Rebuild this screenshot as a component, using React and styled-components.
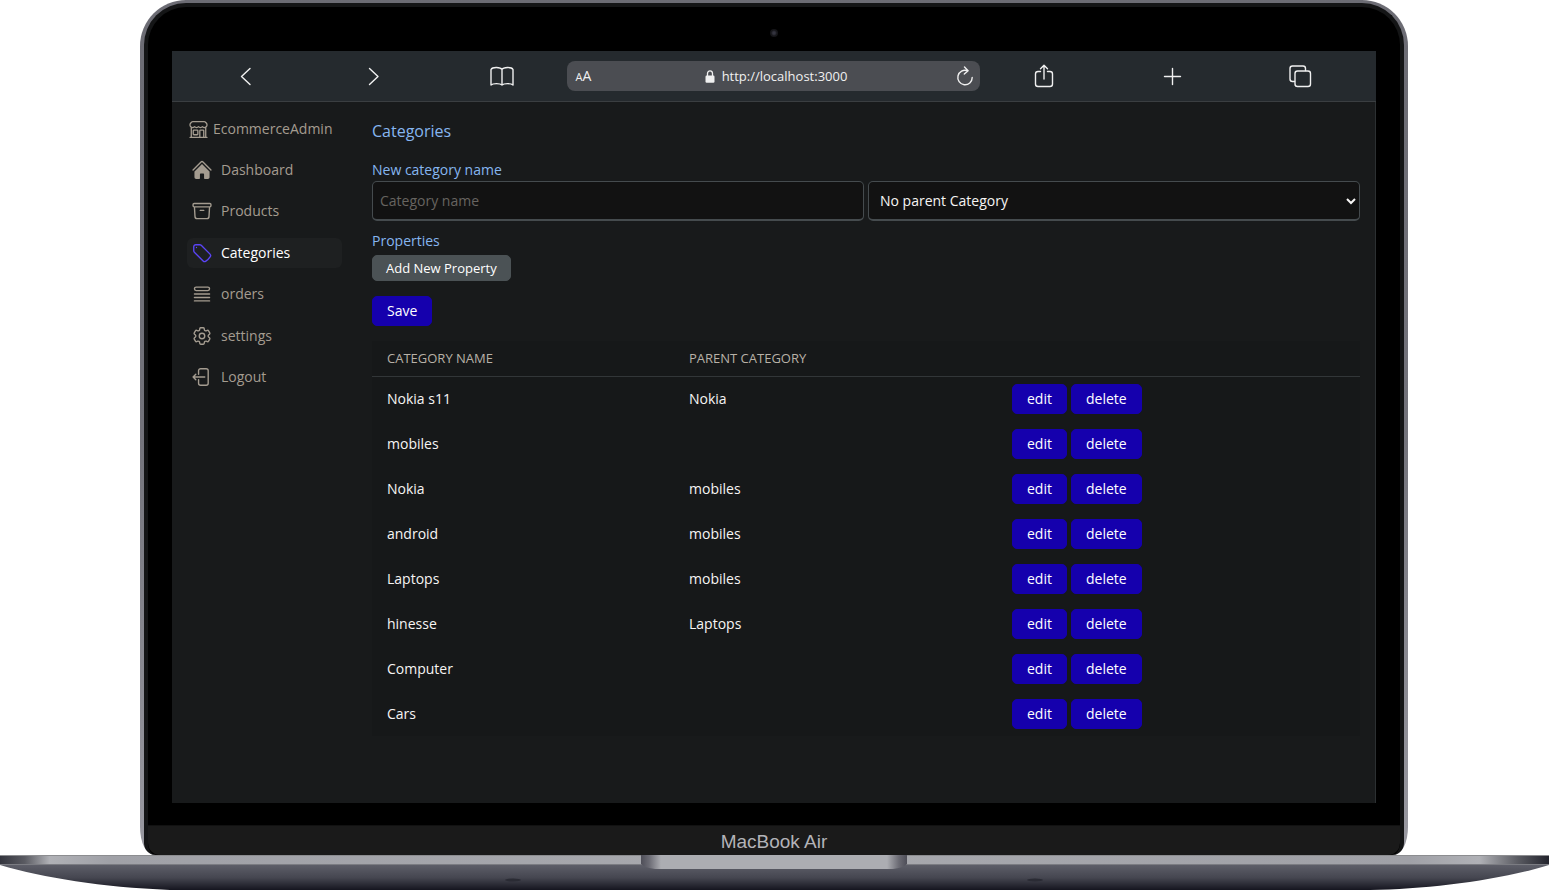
import React from "react";
import styled, { createGlobalStyle } from "styled-components";
import {
  HiHome,
  HiOutlineArchiveBox,
  HiOutlineBuildingStorefront,
  HiOutlineCog6Tooth,
  HiOutlineQueueList,
  HiOutlineTag,
} from "react-icons/hi2";

const GlobalStyle = createGlobalStyle`
  *, *::before, *::after { box-sizing: border-box; }
  body {
    margin: 0;
    background: #fff;
    color: #f6f5f4;
    font-family: "Open Sans", "Noto Sans", sans-serif;
    font-size: 14px;
    line-height: 20px;
  }
  button, input, select { font: inherit; color: inherit; margin: 0; }
  h1, p { margin: 0; font-weight: 400; }
`;

const Laptop = styled.div`
  display: flex;
  flex-direction: column;
  min-height: 100vh;
`;

const Lid = styled.div`
  flex: 1;
  display: flex;
  flex-direction: column;
  margin: 0 141px 0 140px;
  padding: 3px 4px 0;
  border-radius: 46px 46px 14px 14px / 46px 46px 28px 28px;
  background: linear-gradient(#6c6c74, #73737b 50%, #9a9aa2);
`;

const Bezel = styled.div`
  flex: 1;
  display: flex;
  flex-direction: column;
  border: solid #141516;
  border-width: 4px 4px 0;
  border-radius: 42px 42px 12px 12px;
  background: #000;
  overflow: hidden;
`;

const CameraStrip = styled.div`
  display: flex;
  align-items: center;
  justify-content: center;
  height: 44px;
  padding-top: 8px;
`;

const Camera = styled.span`
  width: 8px;
  height: 8px;
  border-radius: 50%;
  background: radial-gradient(#34343f 20%, #17171b 50%, #101012);
`;

const Screen = styled.div`
  flex: 1;
  display: flex;
  flex-direction: column;
  margin: 0 24px 22px;
  background: #181a1b;
`;

const Chin = styled.div`
  height: 30px;
  border-top: 1px solid #111;
  border-radius: 0 0 12px 12px;
  background: #1a1a1a;
  color: #b3b3b8;
  font-family: "Liberation Sans", sans-serif;
  font-size: 19px;
  line-height: 32px;
  text-align: center;
`;

const BaseArt = styled.svg`
  display: block;
  width: 100%;
  height: 35px;
`;

const Toolbar = styled.header`
  display: grid;
  grid-template-columns: repeat(3, 1fr) minmax(0, 413px) repeat(3, 1fr);
  align-items: center;
  height: 51px;
  padding: 0 12px 0 10px;
  border-bottom: 1px solid #3a3e41;
  background: #252a2e;
`;

const ToolButton = styled.button`
  justify-self: center;
  display: flex;
  padding: 0;
  border: 0;
  background: none;
  color: #f0f0f0;
`;

const AddressBar = styled.div`
  display: grid;
  grid-template-columns: 24px 1fr 24px;
  align-items: center;
  height: 30px;
  padding: 0 3px 0 9px;
  border-radius: 8px;
  background: #4b4d52;
  color: #f0f0f0;
`;

const TextSize = styled(ToolButton)`
  align-items: baseline;
  justify-self: start;
  font-size: 14px;
  small { font-size: 11px; }
`;

const Address = styled.div`
  display: flex;
  align-items: center;
  justify-content: center;
  gap: 7px;
  font-size: 13px;
`;

const Page = styled.div`
  flex: 1;
  display: grid;
  grid-template-columns: 155px minmax(0, 1fr);
  gap: 30px;
  padding: 12px 15px 16px;
  border-right: 1px solid #2c3032;
`;

const Sidebar = styled.aside`
  color: #a49c90;
`;

const Brand = styled.a`
  display: flex;
  align-items: center;
  gap: 4px;
  height: 30px;
  padding-left: 1px;
  color: inherit;
  text-decoration: none;
`;

const Nav = styled.nav`
  display: flex;
  flex-direction: column;
  justify-content: space-between;
  height: 237px;
  margin-top: 11px;
`;

const NavLink = styled.a`
  display: flex;
  align-items: center;
  gap: 8px;
  height: 30px;
  padding-left: 4px;
  border-radius: 6px;
  background: ${(p) => (p.$active ? "#1e2021" : "transparent")};
  color: ${(p) => (p.$active ? "#ffffff" : "inherit")};
  text-decoration: none;
  svg { color: ${(p) => (p.$active ? "#5a44f5" : "inherit")}; }
`;

const Main = styled.main`
  padding-top: 5px;
`;

const Title = styled.h1`
  margin-bottom: 17px;
  color: #86b6f0;
  font-size: 16px;
  line-height: 24px;
`;

const Label = styled.label`
  display: block;
  margin-bottom: 1px;
  color: #86b6f0;
`;

const SectionName = styled.p`
  margin: 10px 0 4px;
  color: #86b6f0;
`;

const FieldRow = styled.div`
  display: grid;
  grid-template-columns: 1fr 1fr;
  gap: 4px;
`;

const fieldLook = `
  width: 100%;
  height: 40px;
  border: 1px solid #454b4e;
  border-bottom: 2px solid #454b4e;
  border-radius: 5px;
  background: #121212;
`;

const TextField = styled.input`
  ${fieldLook}
  padding: 0 7px;
  &::placeholder { color: #676460; opacity: 1; }
`;

const SelectField = styled.select`
  ${fieldLook}
  padding: 0 0 0 7px;
`;

const Button = styled.button`
  display: ${(p) => (p.$block ? "block" : "inline-block")};
  height: ${(p) => (p.$soft ? 26 : 30)}px;
  margin-bottom: ${(p) => (p.$block ? 15 : 0)}px;
  padding: 0 ${(p) => (p.$soft ? 13 : 14)}px;
  border: 1px solid ${(p) => (p.$soft ? "#4b5255" : "#1500ad")};
  border-radius: 5px;
  background: ${(p) => (p.$soft ? "#4b5255" : "#1500ad")};
  color: #ffffff;
  font-size: ${(p) => (p.$soft ? 13 : 14)}px;
`;

const Table = styled.table`
  width: 100%;
  border-collapse: collapse;
  table-layout: fixed;
  background: #161819;
`;

const HeadCell = styled.th`
  width: ${(p) => p.$width};
  height: 35px;
  padding: 0 15px;
  border-bottom: 1px solid #323638;
  color: #b8b1a7;
  font-size: 13px;
  font-weight: 400;
  text-align: left;
  text-transform: uppercase;
`;

const Cell = styled.td`
  height: 45px;
  padding: 0 15px;
`;

const Actions = styled.div`
  display: flex;
  gap: 4px;
`;

const categories = [
  ["Nokia s11", "Nokia"],
  ["mobiles", ""],
  ["Nokia", "mobiles"],
  ["android", "mobiles"],
  ["Laptops", "mobiles"],
  ["hinesse", "Laptops"],
  ["Computer", ""],
  ["Cars", ""],
];

function Glyph({ children, size = 24, weight = 1.4 }) {
  return (
    <svg
      width={size}
      height={size}
      viewBox="0 0 24 24"
      fill="none"
      stroke="currentColor"
      strokeWidth={weight}
      strokeLinecap="round"
      strokeLinejoin="round"
      aria-hidden="true"
    >
      {children}
    </svg>
  );
}

function LogoutIcon({ size }) {
  return (
    <Glyph size={size} weight={1.5}>
      <path d="M8.25 9V5.25A2.25 2.25 0 0 1 10.5 3h6a2.25 2.25 0 0 1 2.25 2.25v13.5A2.25 2.25 0 0 1 16.5 21h-6a2.25 2.25 0 0 1-2.25-2.250V15M5.250 15l-3-3m0 0 3-3m-3 3H15" />
    </Glyph>
  );
}

const navItems = [
  ["Dashboard", HiHome],
  ["Products", HiOutlineArchiveBox],
  ["Categories", HiOutlineTag],
  ["orders", HiOutlineQueueList],
  ["settings", HiOutlineCog6Tooth],
  ["Logout", LogoutIcon],
];

function BrowserToolbar() {
  return (
    <Toolbar>
      <ToolButton aria-label="Back">
        <Glyph><path d="M16 4.5 7.500 12.500 16 20.500" /></Glyph>
      </ToolButton>
      <ToolButton aria-label="Forward">
        <Glyph><path d="M7.500 4.500 16 12.500 7.500 20.500" /></Glyph>
      </ToolButton>
      <ToolButton aria-label="Bookmarks">
        <Glyph>
          <path d="M12 5.500C10.500 3 2.500 2.600 1 5.500V21c2-1.800 9-1.800 11 0 2-1.800 9-1.800 11 0V5.500C21.500 2.600 13.500 3 12 5.500V21" />
        </Glyph>
      </ToolButton>
      <AddressBar>
        <TextSize aria-label="Text size"><small>A</small>A</TextSize>
        <Address>
          <svg width="10" height="13" viewBox="0 0 10 13" aria-hidden="true">
            <path d="M2.500 6V3.500a2.500 2.700 0 0 1 5 0V6" fill="none" stroke="currentColor" strokeWidth="1.300" />
            <rect x="0.500" y="5.500" width="9" height="7.300" rx="1.200" fill="currentColor" />
          </svg>
          http://localhost:3000
        </Address>
        <ToolButton aria-label="Reload">
          <svg width="18" height="20" viewBox="0 0 18 20" fill="none" stroke="currentColor" strokeWidth="1.400" strokeLinecap="round" strokeLinejoin="round" aria-hidden="true">
            <path d="M11.500 4.800A7.200 7.200 0 1 0 16.200 11.500M8.500 1l3.600 3.700L8.300 8" />
          </svg>
        </ToolButton>
      </AddressBar>
      <ToolButton aria-label="Share">
        <Glyph>
          <path d="M8.500 7.500H6A2.500 2.500 0 0 0 3.500 10v10A2.500 2.500 0 0 0 6 22.500h12a2.500 2.500 0 0 0 2.500-2.500V10A2.500 2.500 0 0 0 18 7.500h-2.500M12 15V1.500M8.500 4.800 12 1.300l3.500 3.500" />
        </Glyph>
      </ToolButton>
      <ToolButton aria-label="New tab">
        <Glyph><path d="M12.500 4.500v16M4.500 12.500h16" /></Glyph>
      </ToolButton>
      <ToolButton aria-label="Tabs">
        <Glyph>
          <rect x="7" y="7" width="15.500" height="15.500" rx="2.500" />
          <path d="M6.500 17.500H4.500A2.500 2.500 0 0 1 2 15V4.500A2.500 2.500 0 0 1 4.500 2H15a2.500 2.500 0 0 1 2.500 2.500V6.500" />
        </Glyph>
      </ToolButton>
    </Toolbar>
  );
}

function AdminSidebar() {
  return (
    <Sidebar>
      <Brand href="#">
        <HiOutlineBuildingStorefront size={21} />
        EcommerceAdmin
      </Brand>
      <Nav>
        {navItems.map(([name, Icon]) => (
          <NavLink href="#" key={name} $active={name === "Categories"}>
            <Icon size={22} />
            {name}
          </NavLink>
        ))}
      </Nav>
    </Sidebar>
  );
}

function CategoriesPage() {
  return (
    <Main>
      <Title>Categories</Title>
      <form onSubmit={(e) => e.preventDefault()}>
        <Label htmlFor="category-name">New category name</Label>
        <FieldRow>
          <TextField id="category-name" placeholder="Category name" />
          <SelectField aria-label="Parent category">
            <option>No parent Category</option>
            <option>mobiles</option>
            <option>Laptops</option>
          </SelectField>
        </FieldRow>
        <SectionName>Properties</SectionName>
        <Button type="button" $block $soft>Add New Property</Button>
        <Button type="submit" $block>Save</Button>
      </form>
      <Table>
        <thead>
          <tr>
            <HeadCell $width="302px">Category name</HeadCell>
            <HeadCell $width="323px">Parent category</HeadCell>
            <HeadCell aria-label="Actions" />
          </tr>
        </thead>
        <tbody>
          {categories.map(([name, parent]) => (
            <tr key={name}>
              <Cell>{name}</Cell>
              <Cell>{parent}</Cell>
              <Cell>
                <Actions>
                  <Button type="button">edit</Button>
                  <Button type="button">delete</Button>
                </Actions>
              </Cell>
            </tr>
          ))}
        </tbody>
      </Table>
    </Main>
  );
}

function LaptopBase() {
  return (
    <BaseArt viewBox="0 0 1549 35" preserveAspectRatio="none" aria-hidden="true">
      <defs>
        <linearGradient id="body" x1="0" y1="0" x2="0" y2="1">
          <stop offset="0.280" stopColor="#5e5f69" />
          <stop offset="0.650" stopColor="#454650" />
          <stop offset="1" stopColor="#15151f" />
        </linearGradient>
        <linearGradient id="edge" x1="0" y1="0" x2="1" y2="0">
          <stop offset="0" stopColor="#33343d" />
          <stop offset="0.016" stopColor="#5a5b62" />
          <stop offset="0.032" stopColor="#b0b1b6" />
          <stop offset="0.070" stopColor="#a0a1a7" />
          <stop offset="0.500" stopColor="#a8a9ae" />
          <stop offset="0.910" stopColor="#a0a1a7" />
          <stop offset="0.955" stopColor="#b0b1b6" />
          <stop offset="0.980" stopColor="#5a5b62" />
          <stop offset="1" stopColor="#22232c" />
        </linearGradient>
        <linearGradient id="notch" x1="0" y1="0" x2="1" y2="0">
          <stop offset="0" stopColor="#4e4e58" />
          <stop offset="0.030" stopColor="#6a6a73" />
          <stop offset="0.075" stopColor="#acadb2" />
          <stop offset="0.925" stopColor="#acadb2" />
          <stop offset="0.970" stopColor="#6a6a73" />
          <stop offset="1" stopColor="#4e4e58" />
        </linearGradient>
        <clipPath id="outline">
          <path d="M0 0H1549V10C1500 25 1430 34 1370 35H170C100 32 45 23 0 10Z" />
        </clipPath>
      </defs>
      <g clipPath="url(#outline)">
        <rect width="1549" height="35" fill="url(#body)" />
        <rect width="1549" height="9" fill="url(#edge)" />
        <rect width="1549" height="1" fill="#8c8d90" />
        <rect y="9" width="1549" height="1" fill="#7b7c82" />
        <ellipse cx="513" cy="25" rx="8" ry="1.500" fill="#2a2b34" />
        <ellipse cx="1035" cy="25" rx="8" ry="1.500" fill="#2a2b34" />
      </g>
      <path d="M641 0H907V9Q903 13 893 14H655Q645 13 641 9Z" fill="url(#notch)" />
    </BaseArt>
  );
}

export default function App() {
  return (
    <Laptop>
      <GlobalStyle />
      <Lid>
        <Bezel>
          <CameraStrip><Camera /></CameraStrip>
          <Screen>
            <BrowserToolbar />
            <Page>
              <AdminSidebar />
              <CategoriesPage />
            </Page>
          </Screen>
          <Chin>MacBook Air</Chin>
        </Bezel>
      </Lid>
      <LaptopBase />
    </Laptop>
  );
}
